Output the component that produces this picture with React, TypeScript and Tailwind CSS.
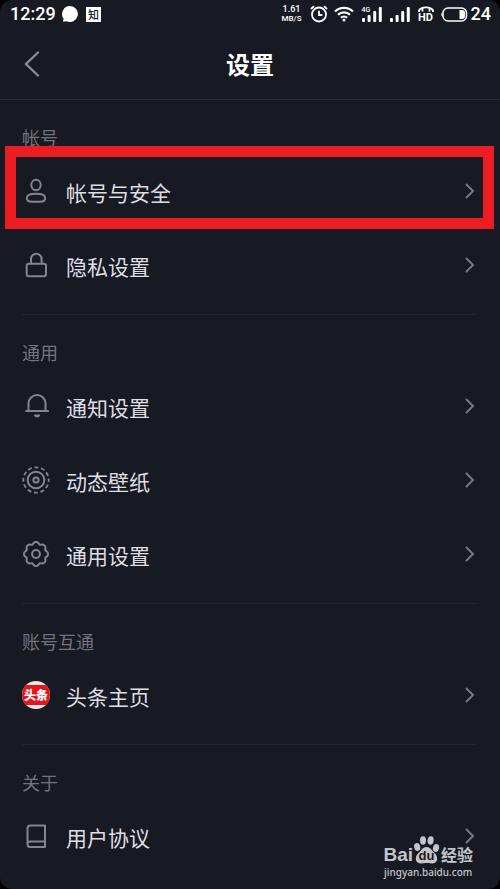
import type { ReactNode } from 'react';

function Glyph({ children }: { children: ReactNode }) {
  return (
    <svg
      viewBox="0 0 28 28"
      className="h-7 w-7 shrink-0"
      fill="none"
      stroke="#84858d"
      strokeWidth="2"
      strokeLinecap="round"
      strokeLinejoin="round"
      aria-hidden="true"
    >
      {children}
    </svg>
  );
}

function UserIcon() {
  return (
    <Glyph>
      <ellipse cx="14" cy="8" rx="4.700" ry="5.200" />
      <path d="M4.800 21c0-2.900 3.400-4.200 9.200-4.200s9.200 1.300 9.200 4.200c0 2.800-1.800 3.800-4.700 3.800h-9C6.600 24.800 4.800 23.800 4.800 21z" />
    </Glyph>
  );
}

function LockIcon() {
  return (
    <Glyph>
      <rect x="4.700" y="12.700" width="19.300" height="12.500" rx="2" />
      <path d="M9 12.500V8a5.300 5.300 0 0 1 10.600 0v4.500" />
    </Glyph>
  );
}

function BellIcon() {
  return (
    <Glyph>
      <path d="M4.600 19h22M7 19v-7.500a8.500 8.500 0 0 1 17 0V19" transform="translate(-.5 0)" />
      <path d="M12.700 23.200h4.800l-1.200 1.400h-2.400z" strokeWidth="1.400" fill="#84858d" />
    </Glyph>
  );
}

function WallpaperIcon() {
  return (
    <Glyph>
      <circle cx="14" cy="14" r="12.700" strokeWidth="1.800" strokeLinecap="butt" strokeDasharray="4 2.650" strokeDashoffset="2" />
      <circle cx="14" cy="14" r="8.300" />
      <circle cx="14" cy="14" r="2.600" />
    </Glyph>
  );
}

const gearOutline = Array.from({ length: 96 }, (_, i) => {
  const a = (i / 96) * Math.PI * 2;
  const r = 11.2 + 0.95 * Math.cos(a * 8) - 0.2 * Math.cos(a * 16);
  return `${(14 + r * Math.sin(a)).toFixed(2)},${(14 - r * Math.cos(a)).toFixed(2)}`;
}).join(' ');

function GearIcon() {
  return (
    <Glyph>
      <polygon points={gearOutline} />
      <circle cx="14" cy="14" r="3.900" />
    </Glyph>
  );
}

function BookIcon() {
  return (
    <Glyph>
      <path d="M23 19.500V3.500H8.500A3 3 0 0 0 5.500 6.500v16a2.500 2.500 0 0 0 2.500 2.500H23v-5.500H8a2.500 2.500 0 0 0-2.500 2.500" />
    </Glyph>
  );
}

function ToutiaoIcon() {
  return (
    <span className="flex h-7 w-7 shrink-0 items-center overflow-hidden rounded-full bg-[#f4e4e4]" aria-hidden="true">
      <span className="flex h-5 w-full items-center justify-center bg-[#e3141a] text-[12px] leading-5 font-black whitespace-nowrap text-white">
        头条
      </span>
    </span>
  );
}

function Chevron() {
  return (
    <svg viewBox="0 0 12 18" className="h-[18px] w-3 shrink-0" fill="none" stroke="#777881" strokeWidth="2" aria-hidden="true">
      <path d="M2.500 2.500L9 9l-6.500 6.500" strokeLinecap="round" />
    </svg>
  );
}

function Row({ icon, label, marked = false }: { icon: ReactNode; label: string; marked?: boolean }) {
  return (
    <li className="relative">
      <button type="button" className="flex h-[74px] w-full items-center gap-4 pr-6 pb-[2px] pl-[22px] text-left">
        {icon}
        <span className="flex-1 pt-[2px] text-[21px] leading-8 text-[#dfdfe3]">{label}</span>
        <Chevron />
      </button>
      {marked && (
        <span className="pointer-events-none absolute -top-[9px] right-[6px] bottom-0 left-[5px] border-[11px] border-[#ec1c24]" />
      )}
    </li>
  );
}

function Section({ title, last = false, children }: { title: string; last?: boolean; children: ReactNode }) {
  return (
    <section>
      <h2 className="px-[22px] pt-[25px] pb-[6px] text-lg leading-6 text-[#73747d]">{title}</h2>
      <ul>{children}</ul>
      {!last && <hr className="mt-[11px] mr-6 ml-[22px] border-t border-[#22242e]" />}
    </section>
  );
}

function Signal() {
  return (
    <g fill="#fff">
      <rect x="0" y="11" width="3" height="4" rx="1" />
      <rect x="5.600" y="8" width="3" height="7" rx="1" />
      <rect x="11.200" y="4" width="3" height="11" rx="1" />
      <rect x="16.800" y="0" width="3" height="15" rx="1" />
    </g>
  );
}

function StatusBar() {
  return (
    <div className="flex h-7 items-center justify-between pr-[9px] pl-[10px] font-[Roboto,'Noto_Sans_CJK_SC',sans-serif] text-white">
      <div className="flex items-center gap-2">
        <span className="w-11 text-lg leading-7 font-medium">12:29</span>
        <svg viewBox="0 0 16 16" className="h-4 w-4" fill="#fff" aria-hidden="true">
          <path d="M8 0a8 8 0 1 1-3.600 15.200L1 15.700l.6-3A8 8 0 0 1 8 0z" />
        </svg>
        <span className="flex h-[15px] w-[15px] items-center justify-center bg-white font-['Noto_Sans_CJK_SC',sans-serif] text-[11px] leading-[15px] font-medium text-[#171923]">
          知
        </span>
      </div>
      <div className="flex items-center">
        <span className="mr-2 flex flex-col items-center text-[8px] font-medium">
          <span className="text-[9px] leading-[10px]">1.61</span>
          <span className="leading-[10px]">MB/S</span>
        </span>
        <svg viewBox="0 0 18 18" className="mr-[6px] h-[18px] w-[18px]" fill="none" stroke="#fff" strokeWidth="1.800" aria-hidden="true">
          <circle cx="9" cy="9.500" r="7" />
          <path d="M9 5.800V10h3.400M1 4l3-2.800M17 4l-3-2.800" />
        </svg>
        <svg viewBox="0 0 20 16" className="mr-2 h-4 w-5" fill="none" stroke="#fff" strokeWidth="2.200" aria-hidden="true">
          <path d="M1 5.500a13 13 0 0 1 18 0M4 8.800a8.600 8.600 0 0 1 12 0M6.900 11.800a4.500 4.500 0 0 1 6.200 0" />
          <circle cx="10" cy="14" r="1.500" fill="#fff" stroke="none" />
        </svg>
        <span className="relative mr-2 block">
          <svg viewBox="0 0 20 15" className="h-[15px] w-5" aria-hidden="true">
            <Signal />
          </svg>
          <span className="absolute -top-px left-0 bg-[#171923] text-[7px] leading-2 font-medium">4G</span>
        </span>
        <svg viewBox="0 0 20 15" className="mr-2 h-[15px] w-5" aria-hidden="true">
          <Signal />
        </svg>
        <span className="relative mr-[6px] block h-4 w-4">
          <svg viewBox="0 0 16 16" className="h-4 w-4" fill="none" stroke="#fff" strokeWidth="1.800" aria-hidden="true">
            <path d="M1 6V4.500C3 .2 13 .2 15 4.500V6M4.500 5.500V2.800M11.500 5.500V2.800" />
          </svg>
          <span className="absolute top-[6px] left-0 w-4 text-center text-[11px] leading-[11px] font-bold">HD</span>
        </span>
        <svg viewBox="0 0 28 15" className="mr-[3px] h-[15px] w-7" aria-hidden="true">
          <rect x="3" y="1" width="23.500" height="13" rx="5" fill="none" stroke="#fff" strokeWidth="1.500" />
          <path d="M2.500 5Q0 7.500 2.500 10z" fill="#fff" />
          <path d="M19.500 3h2.500a3 3 0 0 1 3 3v3a3 3 0 0 1-3 3h-2.500z" fill="#fff" />
        </svg>
        <span className="text-lg leading-7 font-medium">24</span>
      </div>
    </div>
  );
}

function Watermark() {
  return (
    <div className="pointer-events-none absolute right-[27px] bottom-[9px] text-[#c4c5ca]">
      <div className="flex h-[29px] items-end justify-center">
        <span className="font-['Liberation_Sans',sans-serif] text-[19px] leading-[19px] font-bold">Bai</span>
        <span className="relative block h-7 w-7">
          <svg viewBox="0 0 28 28" className="h-7 w-7" fill="#c4c5ca" aria-hidden="true">
            <ellipse cx="4.200" cy="11" rx="3" ry="4" transform="rotate(-15 4.200 11)" />
            <ellipse cx="10" cy="4.500" rx="3" ry="4.200" />
            <ellipse cx="17.600" cy="4.500" rx="3" ry="4.200" transform="rotate(8 17.600 4.500)" />
            <ellipse cx="23" cy="12" rx="3" ry="4" transform="rotate(15 23 12)" />
            <path d="M13.500 11c4 0 5 3.500 8 6 3.500 3 4.300 10-2 10.500-2.500.2-4-.4-6-.4s-3.500.6-6 .4c-6.300-.5-5.500-7.500-2-10.500 3-2.500 4-6 8-6z" />
          </svg>
          <span className="absolute top-[14px] left-0 w-[27px] text-center font-['Liberation_Sans',sans-serif] text-[13px] leading-3 font-bold text-[#171923]">
            du
          </span>
        </span>
        <span className="text-[16px] leading-5 font-bold">经验</span>
      </div>
      <div className="text-center font-['Noto_Sans',sans-serif] text-[10px] leading-4 font-medium">jingyan.baidu.com</div>
    </div>
  );
}

export default function App() {
  return (
    <div className="min-h-screen bg-black font-['Noto_Sans_CJK_SC',sans-serif]">
      <div className="relative min-h-screen rounded-[12px] bg-[#171923] pb-[15px]">
        <StatusBar />
        <header className="grid h-[72px] grid-cols-[1fr_auto_1fr] items-center border-b border-[#2b2d37] px-[22px]">
          <button type="button" aria-label="返回" className="w-5">
            <svg viewBox="0 0 20 28" className="h-7 w-5" fill="none" stroke="#8a8b93" strokeWidth="2.400" strokeLinecap="round" aria-hidden="true">
              <path d="M16 2.500L4 14l12 11.500" />
            </svg>
          </button>
          <h1 className="text-2xl leading-8 font-bold text-white">设置</h1>
        </header>
        <main>
          <Section title="帐号">
            <Row icon={<UserIcon />} label="帐号与安全" marked />
            <Row icon={<LockIcon />} label="隐私设置" />
          </Section>
          <Section title="通用">
            <Row icon={<BellIcon />} label="通知设置" />
            <Row icon={<WallpaperIcon />} label="动态壁纸" />
            <Row icon={<GearIcon />} label="通用设置" />
          </Section>
          <Section title="账号互通">
            <Row icon={<ToutiaoIcon />} label="头条主页" />
          </Section>
          <Section title="关于" last>
            <Row icon={<BookIcon />} label="用户协议" />
          </Section>
        </main>
        <Watermark />
      </div>
    </div>
  );
}
